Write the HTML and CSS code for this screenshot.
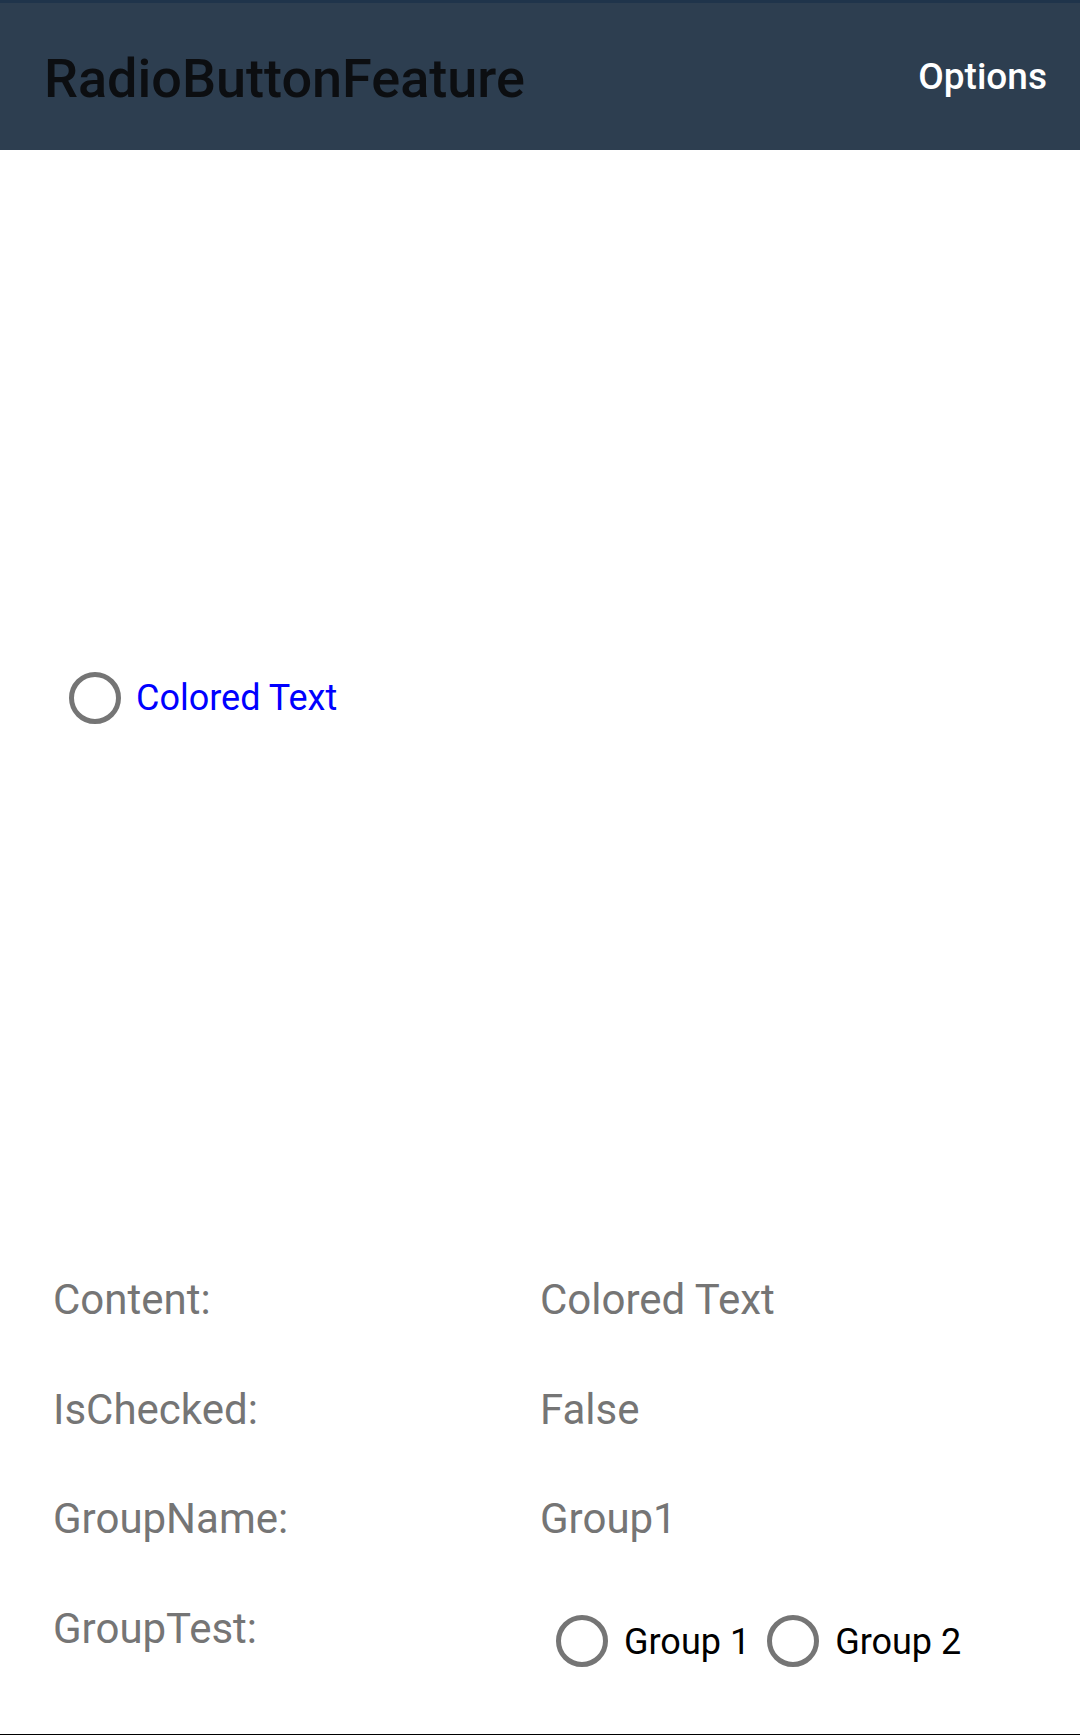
FILE: index.html
```html
<!DOCTYPE html>
<html lang="en">
<head>
<meta charset="utf-8">
<title>RadioButtonFeature</title>
<link rel="stylesheet" href="styles.css">
</head>
<body>
<div class="page">
  <header class="appbar">
    <h1 class="title">RadioButtonFeature</h1>
    <span class="options">Options</span>
  </header>
  <main class="content">
    <div class="demo">
      <label class="radio">
        <span class="circle"></span>
        <span class="radio-text colored">Colored Text</span>
      </label>
    </div>
    <div class="props">
      <div class="label">Content:</div>
      <div class="value">Colored Text</div>
      <div class="label">IsChecked:</div>
      <div class="value">False</div>
      <div class="label">GroupName:</div>
      <div class="value">Group1</div>
      <div class="label">GroupTest:</div>
      <div class="value group">
        <label class="radio small">
          <span class="circle"></span>
          <span class="radio-text">Group 1</span>
        </label>
        <label class="radio small">
          <span class="circle"></span>
          <span class="radio-text">Group 2</span>
        </label>
      </div>
    </div>
  </main>
</div>
</body>
</html>
```
FILE: styles.css
```css
* { box-sizing: border-box; }
html, body { margin: 0; padding: 0; background: #ffffff; }
body { font-family: Roboto, "Noto Sans", "Liberation Sans", sans-serif; }

.page {
  width: 1080px;
  height: 1735px;
  display: flex;
  flex-direction: column;
  border-bottom: 1px solid #000000;
  overflow: hidden;
}

.appbar {
  height: 150px;
  flex: 0 0 150px;
  background: #2d3e50;
  border-top: 3px solid #1f344b;
  display: flex;
  justify-content: space-between;
  align-items: flex-start;
  padding: 0 33px 0 44px;
}

.title {
  margin: 44px 0 0 0;
  font-size: 54px;
  line-height: 64px;
  font-weight: 500;
  color: #0c0e11;
}

.options {
  margin-top: 52px;
  font-size: 37px;
  line-height: 44px;
  font-weight: 500;
  color: #ffffff;
}

.content {
  flex: 1;
  display: flex;
  flex-direction: column;
}

.demo {
  margin-top: 521px;
  padding-left: 69px;
  display: flex;
}

.radio {
  display: flex;
  align-items: center;
  gap: 15px;
}

.circle {
  width: 52px;
  height: 52px;
  flex: 0 0 52px;
  border: 5.5px solid #757575;
  border-radius: 50%;
}

.radio-text {
  font-size: 36px;
  line-height: 52px;
  padding-top: 1px;
  color: #000000;
}

.colored { color: #0000ff; }

.props {
  margin-top: 551px;
  padding-left: 53px;
  display: grid;
  grid-template-columns: 487px 1fr;
  row-gap: 60.5px;
  font-size: 42px;
  line-height: 49px;
  color: #757575;
}

.group {
  display: flex;
  gap: 17px;
  padding-left: 16px;
  margin-top: 11px;
}

.small { gap: 16px; }
.small .radio-text { padding-top: 1px; }
```
